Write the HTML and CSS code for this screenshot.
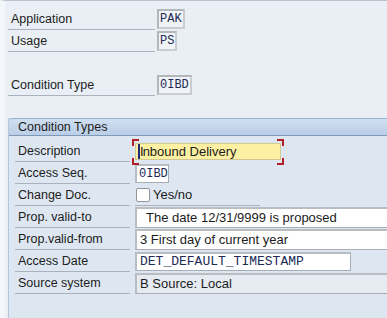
FILE: index.html
```html
<!DOCTYPE html>
<html lang="en">
<head>
  <meta charset="UTF-8" />
  <title>Condition Types</title>
  <link rel="stylesheet" href="styles.css">
</head>
<body>
  <div class="screen">

    <!-- Key fields -->
    <div class="keys">
      <div class="row">
        <div class="lbl">Application</div>
        <div class="key-field">PAK</div>
      </div>
      <div class="row">
        <div class="lbl">Usage</div>
        <div class="key-field">PS</div>
      </div>
      <div class="row spacer"></div>
      <div class="row">
        <div class="lbl">Condition Type</div>
        <div class="key-field">0IBD</div>
      </div>
    </div>

    <!-- Group box -->
    <div class="group">
      <div class="group-title">Condition Types</div>
      <div class="group-body">
        <div class="row">
          <div class="lbl">Description</div>
          <div class="focus">
            <span class="corner tl"></span><span class="corner tr"></span>
            <span class="corner bl"></span><span class="corner br"></span>
            <div class="field desc"><span class="caret">I</span>nbound Delivery</div>
          </div>
        </div>
        <div class="row">
          <div class="lbl">Access Seq.</div>
          <div class="field mono seq">0IBD</div>
        </div>
        <div class="row">
          <div class="lbl">Change Doc.</div>
          <div class="check">
            <span class="box"></span>
            <span>Yes/no</span>
          </div>
        </div>
        <div class="row">
          <div class="lbl">Prop. valid-to</div>
          <div class="field wide indent">The date 12/31/9999 is proposed</div>
        </div>
        <div class="row">
          <div class="lbl">Prop.valid-from</div>
          <div class="field wide">3 First day of current year</div>
        </div>
        <div class="row">
          <div class="lbl">Access Date</div>
          <div class="field mono date">DET_DEFAULT_TIMESTAMP</div>
        </div>
        <div class="row">
          <div class="lbl">Source system</div>
          <div class="field wide readonly">B Source: Local</div>
        </div>
      </div>
    </div>

  </div>
</body>
</html>
```

FILE: styles.css
```css
body {
  margin: 0;
  padding: 0;
  font-family: 'Liberation Sans', Arial, sans-serif;
  font-size: 12.5px;
  color: #1c1c1c;
  background-color: #e9eff5;
  overflow: hidden;
}

.screen {
  height: 317px;
  border-top: 1px solid #b9c4d0;
  border-left: 5px solid #f4f7fa;
  padding-left: 3px;
  overflow: hidden;
}

.keys {
  padding-top: 7px;
}

.row {
  display: flex;
  align-items: center;
  height: 22px;
}

.lbl {
  box-sizing: border-box;
  width: 147px;
  height: 100%;
  padding-left: 3px;
  display: flex;
  align-items: center;
  border-bottom: 1px solid #aab3bd;
  flex-shrink: 0;
}

.spacer {
  height: 22px;
}

.key-field {
  box-sizing: border-box;
  height: 20px;
  margin-left: 2px;
  margin-top: -1px;
  padding: 0 1px;
  display: flex;
  align-items: center;
  background-color: #f1f4f7;
  border: 2px solid #b3b6ba;
  border-right-color: #c9ccd0;
  border-bottom-color: #c9ccd0;
  font-family: 'Liberation Mono', 'Courier New', monospace;
  font-size: 12px;
  color: #202a55;
}

.group {
  margin-top: 22px;
  border-left: 1px solid #b4c6dc;
}

.group-title {
  height: 16px;
  line-height: 16px;
  padding-left: 9px;
  border-top: 1px solid #98b3d4;
  border-bottom: 1px solid #8097b6;
  border-top-left-radius: 3px;
  background: linear-gradient(#d0def0, #b9cee7);
}

.group-body {
  background-color: #dee7f1;
  padding: 4px 0 30px 6px;
}

.group-body .lbl {
  width: 115px;
  margin-right: 5px;
}

.field {
  box-sizing: border-box;
  height: 20px;
  padding-left: 3px;
  display: flex;
  align-items: center;
  white-space: nowrap;
  flex-shrink: 0;
  background-color: #fff;
  border: 1px solid #a7adb3;
  border-top: 2px solid #b9bdc2;
  border-left: 2px solid #b9bdc2;
}

.mono {
  font-family: 'Liberation Mono', 'Courier New', monospace;
  font-size: 13px;
  color: #202a55;
}

.focus {
  position: relative;
  height: 22px;
  display: flex;
  align-items: center;
  margin-top: 1px;
}

.desc {
  width: 146px;
  height: 17px;
  padding-left: 2px;
  background-color: #fdf0a3;
  border: 1px solid #d2c98e;
  font-size: 13px;
}

.caret {
  border-left: 2px solid #1c2c78;
  margin-right: -1px;
}

.corner {
  position: absolute;
  width: 5px;
  height: 5px;
  border: 0 solid #b11f27;
}

.corner.tl { left: -3px; top: -2px; border-top-width: 2px; border-left-width: 2px; }
.corner.tr { right: -3px; top: -2px; border-top-width: 2px; border-right-width: 2px; }
.corner.bl { left: -3px; bottom: -2px; border-bottom-width: 2px; border-left-width: 2px; }
.corner.br { right: -3px; bottom: -2px; border-bottom-width: 2px; border-right-width: 2px; }

.seq {
  width: 34px;
  height: 19px;
  padding-left: 2px;
  font-size: 12px;
}

.check {
  box-sizing: border-box;
  width: 125px;
  height: 100%;
  display: flex;
  align-items: center;
  gap: 3px;
  padding-left: 1px;
  border-bottom: 1px solid #aab3bd;
  font-size: 13px;
}

.check .box {
  width: 12px;
  height: 12px;
  background-color: #fff;
  border: 1px solid #8f959b;
  border-radius: 2px;
}

.wide {
  width: 270px;
  height: 21px;
  font-size: 13px;
}

.indent {
  padding-left: 9px;
}

.date {
  width: 216px;
  height: 19px;
}

.readonly {
  background-color: #e5ebf1;
}
```
